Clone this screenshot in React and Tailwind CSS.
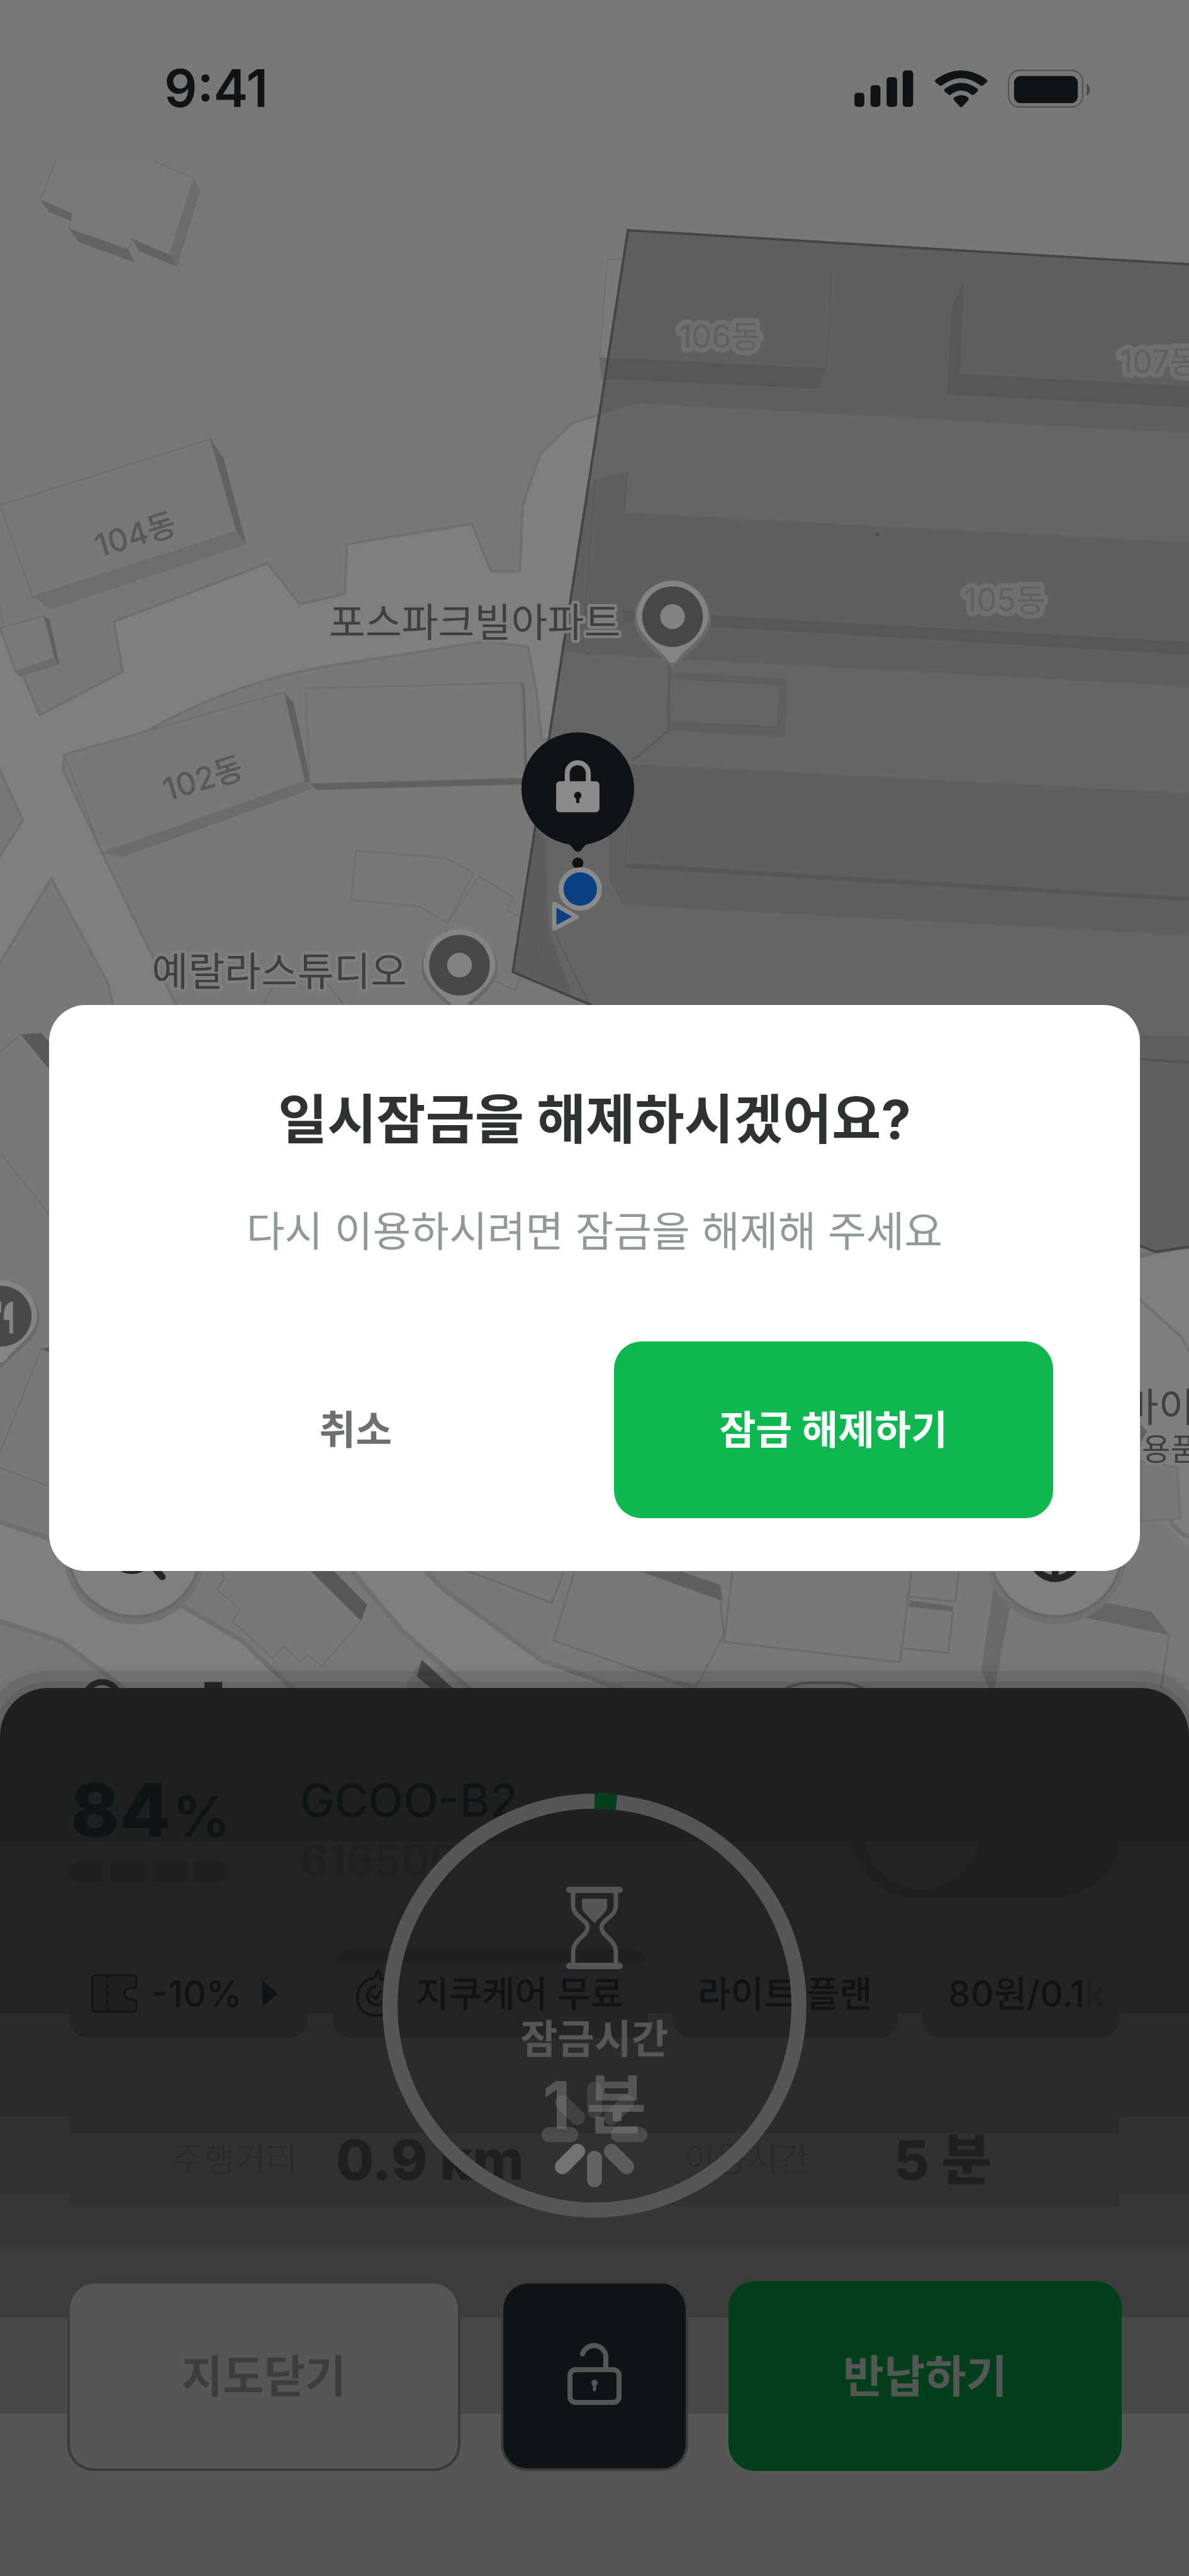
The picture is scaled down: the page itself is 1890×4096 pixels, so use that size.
import React from "react";
import { useState } from "react";

const PlacePin = ({ x, y, children }) => (
  <g transform={`translate(${x} ${y})`}>
    <path
      d="M-62 6A62 62 0 1 1 62 6C60 38 24 56 0 84C-24 56 -60 38 -62 6Z"
      fill="#6a6a6a"
    />
    <path
      d="M-58 0A58 58 0 1 1 58 0C56 34 20 50 8 70Q0 80 -8 70C-20 50 -56 34 -58 0Z"
      fill="#848484"
    />
    <circle r="49" fill="#484848" />
    {children || <circle r="20" fill="#828282" />}
  </g>
);

const CityMap = () => (
  <svg
    className="absolute inset-x-0 top-0 w-full"
    viewBox="0 0 1920 2800"
    aria-hidden="true"
    fontFamily="Inter, 'Noto Sans CJK KR', sans-serif"
  >
    <defs>
      <clipPath id="zone">
        <path d="M1014 372L1920 427V2014L1866 2022L1840 2012L951 1622L828 1570Z" />
      </clipPath>
    </defs>
    <rect width="1920" height="2800" fill="#787878" />

    {/* roads */}
    <g fill="#7f7f7f" stroke="#6f6f6f" strokeWidth="4" strokeLinejoin="round">
      <path d="M967 670L924 683L872 734L844 817L839 923H793L762 846L560 879L557 959L484 976L432 910L184 1004L198 1085L64 1155L39 1095L-9 1000V1235L0 1245L37 1325L0 1383L-9 1400V1590L0 1555L83 1419L175 1590L186 1640H290L284 1622L165 1378L102 1243L104 1219L233 1183Q380 1100 530 1076L784 1036L853 1045L866 1116L875 1196L900 1190Z" />
      <path
        strokeWidth="8"
        d="M-9 2455L79 2485L288 2590L392 2651L485 2740H215L165 2700L98 2651L-9 2616Z"
      />
      <path
        strokeWidth="8"
        d="M560 2520L570 2540L649 2634L772 2740H1030L1000 2727L875 2682L716 2567L690 2540L680 2520Z"
      />
      <path
        strokeWidth="8"
        d="M1800 2040L1842 2103L1905 2160L1940 2220V2010L1866 2022Z"
      />
    </g>
    <path d="M1800 2110L1842 2103L1905 2160L1920 2185V2500L1880 2460L1843 2458Z" fill="#7e7e7e" />
    <path d="M1843 2458L1906 2453L1901 2370L1843 2360Z" fill="#787878" stroke="#6f6f6f" strokeWidth="3" />
    <path d="M1888 2454Q1904 2480 1925 2484" fill="none" stroke="#6f6f6f" strokeWidth="7" />
    <path d="M1842 2300L1852 2312L1842 2330Z" fill="#606162" />

    {/* buildings, north west */}
    <g strokeLinejoin="round">
      <path
        d="M90 259L65 323L115 344L112 370L207 403L213 386L274 412L313 288L245 259"
        fill="#797979"
        stroke="#6f6f6f"
        strokeWidth="2"
      />
      <path
        d="M65 323L115 344V357L80 343ZM112 370L207 403L218 424L127 391ZM213 386L274 412L286 431L225 406Z"
        fill="#636365"
      />
      <path d="M313 288L323 309L286 431L274 412Z" fill="#6c6c6c" />

      <path d="M0 816L340 709L382 858L53 964Z" fill="#787878" stroke="#6f6f6f" strokeWidth="3" />
      <path d="M53 964L382 858L398 879L83 984Z" fill="#6d6d6d" />
      <path d="M340 709L361 740L398 879L382 858Z" fill="#616162" />

      <path d="M0 1014L71 995L90 1062L25 1085Z" fill="#797979" stroke="#6f6f6f" strokeWidth="3" />
      <path d="M71 995L80 1000L96 1074L88 1062Z" fill="#5f6061" />
      <path d="M25 1085L88 1062L96 1074L31 1093Z" fill="#6c6c6c" />
      <path d="M0 980L6 1012" stroke="#6f6f6f" strokeWidth="2" />

      <path d="M104 1219L459 1118L493 1262L165 1378Z" fill="#787878" stroke="#6f6f6f" strokeWidth="3" />
      <path d="M165 1378L493 1262L504 1274L198 1384Z" fill="#6b6b6b" />
      <path d="M459 1118L474 1135L502 1265L493 1262Z" fill="#5f6061" />
      <path d="M493 1112L842 1103L848 1258L500 1266Z" fill="#787878" stroke="#6f6f6f" strokeWidth="3" />
      <path d="M500 1266L848 1257V1267L512 1276Z" fill="#606162" />
      <path d="M842 1103L846 1112L850 1258" fill="none" stroke="#606162" strokeWidth="3" />

      <g fill="none" stroke="#6e6e6e" strokeWidth="3">
        <path d="M575 1374L718 1386L765 1410L722 1491L677 1464L567 1454Z" />
        <path d="M722 1491L774 1416L829 1449L818 1470L839 1480M730 1540L720 1500M800 1585L832 1600L842 1575" />
        <path d="M425 1622L450 1580M528 1590L555 1622" />
      </g>
    </g>

    {/* housing complex */}
    <path d="M981 419H1010L990 580H968Z" fill="#7a7a7a" stroke="#6f6f6f" strokeWidth="2" />
    <path d="M968 577H985V612H971Z" fill="#696969" />
    <g clipPath="url(#zone)">
      <rect x="800" y="360" width="1120" height="1700" fill="#5f5f61" />
      <g fill="#646567">
        <path d="M940 685L967 670L1031 651L1920 700V876L1008 828L1013 761L961 773L900 900Z" />
        <path d="M880 1050L953 1057L1920 1109V1675L820 1640Z" />
      </g>
      <path d="M1016 1234L1920 1281V1511L1008 1462L985 1420V1340Z" fill="#5f5f61" />
      <path d="M850 1320L882 1357L885 1500L930 1625L800 1580Z" fill="#5d5d5f" />
      <path d="M882 1357H985V1420L1000 1470L1000 1540L893 1500Z" fill="#646567" />
      <path d="M885 1500L850 1600M893 1500L951 1622M985 1340V1420L1008 1462" fill="none" stroke="#58595a" strokeWidth="2" />
      <path d="M1081 1084L1272 1096L1267 1191L1079 1180Z" fill="#5f5f61" />
      <path d="M1081 1096L1259 1106L1256 1174L1079 1166Z" fill="#636466" stroke="#595a5b" strokeWidth="1" />
      <path d="M1081 1070L1079 1180L1020 1230" fill="none" stroke="#58595a" strokeWidth="3" />
      <g fill="#555856">
        <path d="M940 575L968 577L1335 595L1322 628L971 612L940 610Z" />
        <path d="M1556 455L1537 494L1529 637L1920 658V624L1550 604Z" />
        <path d="M1004 985L1151 994L1920 1037V1058L1008 1004Z" />
        <path d="M1010 1394L1920 1449V1456L1010 1402Z" />
      </g>
      <path d="M1343 437L1335 595M961 773L940 1050L953 1057M1013 761L1008 828M1016 1320L1010 1394" fill="none" stroke="#58595a" strokeWidth="2" />
      <path d="M1840 1711L1920 1716" stroke="#545456" strokeWidth="4" />
      <circle cx="1417" cy="863" r="3" fill="#4c4c4e" />
    </g>
    <path
      d="M1920 427L1014 372L828 1570L951 1622L1840 2012L1866 2022L1920 2014"
      fill="none"
      stroke="#444546"
      strokeWidth="4"
    />

    {/* west edge */}
    <g fill="none" stroke="#6a6a6a" strokeWidth="2">
      <path d="M0 1699L33 1671M0 1862L79 1961M0 2346L67 2178L79 2180M0 2371L79 2401" />
    </g>
    <path d="M34 1671L66 1668L79 1683V1727Z" fill="#565957" />
    <path d="M67 2179L79 2176V2184Z" fill="#565957" />

    {/* south blocks */}
    <g fill="none" stroke="#6a6a6a" strokeWidth="3">
      <path strokeWidth="2" d="M355 2530L363 2550L351 2567L388 2600L375 2618L441 2679L459 2659L485 2685L496 2673L520 2691L583 2618" />
      <path d="M735 2530L891 2589L914 2530M930 2530L894 2650L1114 2727" />
      <path d="M1184 2530L1169 2652L1453 2685L1473 2530M1163 2586L1169 2640L1123 2727M1040 2700L1123 2725" />
      <path d="M1469 2579L1543 2587L1549 2530M1539 2603L1531 2670L1455 2662M1888 2641L1875 2727" />
    </g>
    <path d="M502 2538H539L593 2592L583 2618Z" fill="#555856" />
    <path d="M1035 2539H1102L1163 2560L1167 2586Z" fill="#5f5f61" />
    <path d="M1469 2585L1539 2595V2603L1467 2595Z" fill="#626365" />
    <path d="M1606 2558L1632 2592L1606 2727H1598L1584 2699Z" fill="#69696a" />
    <path d="M1778 2588L1859 2603L1888 2641L1733 2609Z" fill="#636466" />
    <path d="M681 2681L740 2735H700L673 2708Z" fill="#454545" />
    <path d="M673 2708L681 2681L650 2730H700Z" fill="#6e6e6e" />

    {/* floating map controls */}
    {[217, 1705].map((cx) => (
      <g key={cx}>
        <circle cx={cx} cy="2510" r="114" fill="#707070" />
        <circle cx={cx} cy="2506" r="108" fill="#686868" />
        <circle cx={cx} cy="2504" r="105" fill="#7f7f7f" />
      </g>
    ))}
    <g fill="none" stroke="#242424" strokeWidth="11" strokeLinecap="round">
      <circle cx="213" cy="2502" r="35" />
      <path d="M240 2522L262 2547" />
      <circle cx="1704" cy="2512" r="38" />
      <path d="M1704 2500V2550" />
    </g>
    <circle cx="165" cy="2745" r="28" fill="none" stroke="#2b2b2b" strokeWidth="10" />
    <rect x="330" y="2717" width="29" height="20" fill="#2b2b2b" />
    <path d="M1265 2730Q1285 2716 1330 2718Q1380 2716 1397 2730" fill="none" stroke="#565957" strokeWidth="4" />

    {/* labels */}
    <g fontSize="51" fontWeight="500" textAnchor="middle" fill="#585858">
      <text transform="translate(224 881) rotate(-17)">104동</text>
      <text transform="translate(333 1275) rotate(-17)">102동</text>
      <g
        fill="#606062"
        fontWeight="400"
        stroke="#6f6f6f"
        strokeWidth="16"
        strokeLinejoin="round"
        paintOrder="stroke"
      >
        <text x="1162" y="562">106동</text>
        <text x="1872" y="602">107동</text>
        <text x="1622" y="987">105동</text>
      </g>
    </g>
    <g
      fontSize="64"
      fontWeight="400"
      fill="#3f3f3f"
      stroke="#7f7f7f"
      strokeWidth="9"
      strokeLinejoin="round"
      paintOrder="stroke"
    >
      <text x="531" y="1028">포스파크빌아파트</text>
      <text x="245" y="1592">예랄라스튜디오</text>
      <text x="1812" y="2296">바이</text>
      <text x="1844" y="2359" fontSize="50">
        용품
      </text>
    </g>
    <PlacePin x={1086} y={996} />
    <PlacePin x={742} y={1559} />
    <PlacePin x={2} y={2126}>
      <path d="M19 -24Q4 -22 4 0V6H13V28H19ZM-8 -24H0V-6H-8Z" fill="#848484" />
    </PlacePin>

    {/* locked scooter and rider position */}
    <g fill="#0f1315">
      <circle cx="933" cy="1274" r="91" />
      <path d="M895 1352Q920 1360 927 1373Q933 1379 939 1373Q946 1360 971 1352Z" />
      <circle cx="933" cy="1394" r="9" />
    </g>
    <rect x="898" y="1262" width="70" height="50" rx="6" fill="#8b8b8b" />
    <path d="M916 1264V1249A17 17 0 0 1 950 1249V1264" fill="none" stroke="#8b8b8b" strokeWidth="8" />
    <circle cx="933" cy="1285" r="6" fill="#0f1315" />
    <path d="M933 1285V1297" stroke="#0f1315" strokeWidth="5" />
    <circle cx="937" cy="1436" r="31" fill="#0b4183" stroke="#8a8a8a" strokeWidth="8" />
    <path
      d="M895 1460L931 1481L895 1500Z"
      fill="#0b4183"
      stroke="#8a8a8a"
      strokeWidth="7"
      strokeLinejoin="round"
    />
  </svg>
);

const StatusBar = () => (
  <header className="relative flex h-[282px] items-center justify-between pr-[154px] pl-[261px] text-[#0f1315]">
    <time className="text-[82px] leading-none font-semibold">9:41</time>
    <svg className="h-[60px] w-[378px]" viewBox="1379 111 384 61" fill="#0f1315" aria-hidden="true">
      <rect x="1379" y="148" width="16" height="23" rx="5" />
      <rect x="1405" y="136" width="16" height="35" rx="5" />
      <rect x="1431" y="123" width="17" height="48" rx="5" />
      <rect x="1457" y="112" width="17" height="59" rx="5" />
      <path d="M1510 131Q1508 129 1511 126Q1552 98 1592 126Q1595 129 1593 131L1587 136Q1585 138 1582 136Q1552 113 1521 136Q1518 138 1516 136Z" />
      <path d="M1525 146Q1523 143 1526 141Q1552 123 1577 141Q1580 143 1578 146L1572 151Q1570 153 1568 151Q1552 138 1535 151Q1533 153 1531 151Z" />
      <path d="M1540 160Q1538 157 1541 155Q1552 149 1562 155Q1565 157 1563 160L1553 171Q1552 172 1550 171Z" />
      <rect x="1628" y="112" width="120" height="59" rx="18" fill="none" stroke="#4e4f50" strokeWidth="2" />
      <rect x="1637" y="121" width="103" height="44" rx="11" />
      <path d="M1754 133Q1760 137 1760 143Q1760 150 1754 153Z" fill="#4e4f50" />
    </svg>
  </header>
);

const chipStyle = "flex h-[140px] shrink-0 items-center rounded-[28px] bg-[#242424]";

const Chips = () => (
  <div className="mt-[83px] flex gap-10 overflow-hidden px-1 text-[57px] leading-none font-medium whitespace-nowrap text-[#101416]">
    <button className={`${chipStyle} w-[378px] gap-[22px] pl-[34px]`}>
      <svg className="h-[62px] w-[74px]" viewBox="0 0 74 62" fill="none" stroke="#101416" strokeWidth="3">
        <path
          d="M6 2H66Q72 2 72 8V18Q72 22 67 22Q54 22 52 31Q54 41 67 41Q72 41 72 46V54Q72 60 66 60H6Q2 60 2 55V7Q2 2 6 2Z"
          fill="#1f2120"
        />
        <path d="M26 2V60" strokeDasharray="8 5" />
      </svg>
      -10%
      <svg className="ml-[10px] h-[42px] w-[24px]" viewBox="0 0 24 42" fill="#101416">
        <path d="M1 3Q1 0 4 2L23 19Q24 21 23 23L4 40Q1 42 1 39Z" />
      </svg>
    </button>
    <button
      className={`${chipStyle} w-[500px] bg-[linear-gradient(#1f2120_20px,#242424_20px)] pl-[36px]`}
    >
      <svg className="mr-[30px] h-[76px] w-[66px]" viewBox="0 0 66 76" fill="none" stroke="#101416" strokeWidth="4">
        <path d="M33 10Q33 4 37 2Q41 8 39 14Q62 20 63 43Q62 72 33 73Q4 72 3 43Q5 22 22 15Q30 14 33 10Z" />
        <path d="M33 26Q20 30 19 42Q21 55 33 56Q46 55 48 42M24 39L33 46L40 34" />
      </svg>
      지쿠케어 무료
    </button>
    <button className={`${chipStyle} w-[358px] justify-center`}>라이트 플랜</button>
    <button className={`${chipStyle} w-[312px] pl-[40px]`}>
      80원/0.1<span className="text-[#1d1f1f]">k</span>
    </button>
  </div>
);

const Stats = () => (
  <dl className="mx-1 mt-[119px] flex h-[150px] items-center bg-[linear-gradient(#2b2b2b_33px,#303132_33px)] pl-[163px] leading-none whitespace-nowrap">
    <dt className="text-[54px] font-light text-[#282929]">주행거리</dt>
    <dd className="ml-[61px] text-[88px] font-extrabold text-[#1f2120]">0.9 km</dd>
    <dt className="ml-[255px] text-[54px] font-light text-[#282929]">이동시간</dt>
    <dd className="ml-[134px] text-[87px] font-extrabold text-[#1f2120]">5 분</dd>
  </dl>
);

// opacity of each spoke, clockwise from the top
const spokes = [0.2, 0.22, 0.3, 0.45, 0.52, 0.7, 0.3, 0.22];

const LockTimer = () => (
  <div className="pointer-events-none absolute inset-x-0 top-[168px] flex justify-center">
    <div className="relative flex size-[674px] flex-col items-center pt-[148px] leading-none text-[#545755]">
      <svg className="absolute inset-0" viewBox="0 0 674 674" fill="none" strokeWidth="24">
        <circle cx="337" cy="337" r="325" stroke="#545755" />
        <path d="M337 12A325 325 0 0 1 372 14" stroke="#043f1c" />
      </svg>
      <svg className="h-[131px] w-[90px]" viewBox="0 0 90 131" fill="none" stroke="#545755">
        <path d="M5 5H85M5 126H85" strokeWidth="10" strokeLinecap="round" />
        <path
          d="M11 8V30C11 48 34 52 34 65C34 78 11 84 11 104V124M79 8V30C79 48 56 52 56 65C56 78 79 84 79 104V124"
          strokeWidth="7"
        />
        <path d="M26 19H64Q65 19 65 21V32Q65 36 62 40L45 58L28 40Q25 36 25 32V21Q25 19 26 19Z" fill="#545755" stroke="none" />
      </svg>
      <p className="mt-[79px] text-[64px] font-bold">잠금시간</p>
      <p className="mt-[21px] text-[104px] font-bold">1 분</p>
      <svg className="absolute top-[457px] size-[170px]" viewBox="-85 -85 170 170">
        {spokes.map((opacity, i) => (
          <rect
            key={i}
            x="-12"
            y="-84"
            width="24"
            height="58"
            rx="12"
            fill="#909090"
            opacity={opacity}
            transform={`rotate(${i * 45})`}
          />
        ))}
      </svg>
    </div>
  </div>
);

const RideSheet = () => {
  const [headlight, setHeadlight] = useState(false);

  return (
    <section className="relative mt-auto rounded-t-[76px] bg-[linear-gradient(#1f2120_245px,#242424_245px,#242424_517px,#2b2b2b_517px,#2b2b2b_682px,#303132_682px,#303132_804px,#363836_804px,#363836_889px,#3c3c3c_889px,#3c3c3c_1001px,#484848_1001px,#484848_1154px,#545755_1154px)] px-[107px] pt-[118px] pb-[167px] shadow-[0_0_0_10px_rgba(20,30,36,0.11),0_0_0_27px_rgba(0,0,0,0.08),0_0_0_35px_rgba(0,0,0,0.03)]">
      <div className="flex h-[215px] items-start leading-none text-[#101416]">
        <div className="w-[370px] pt-[17px]">
          <p className="pl-[5px] text-[118px] leading-none font-extrabold">
            84<span className="pl-[3px] text-[90px] font-bold">%</span>
          </p>
          <div className="mt-6 flex gap-[10px] pl-px">
            <span className="h-[30px] w-[57px] rounded-l-full bg-[#1f2120]"></span>
            <span className="h-[30px] w-[57px] bg-[#1f2120]"></span>
            <span className="h-[30px] w-[57px] bg-[#1f2120]"></span>
            <span className="h-[30px] w-[55px] rounded-r-full bg-[#1f2120]"></span>
          </div>
        </div>
        <div className="pt-6">
          <p className="text-[73px] font-medium">GCOO-B2</p>
          <p className="mt-[25px] text-[69px] font-semibold text-[#1f2120]">616500</p>
        </div>
        <label className="relative ml-auto flex h-[215px] w-[434px] items-center rounded-full bg-[#1f2120] px-[23px]">
          <input
            type="checkbox"
            role="switch"
            aria-label="전조등"
            className="absolute inset-0 appearance-none"
            checked={headlight}
            onChange={(e) => setHeadlight(e.target.checked)}
          />
          <span className="size-[187px] rounded-full bg-[linear-gradient(#1f2120_113px,#242424_113px)]"></span>
        </label>
      </div>
      <Chips />
      <Stats />
      <div className="mt-[118px] flex h-[302px] gap-[64px] text-[71px] font-bold">
        <button className="mt-1 flex-1 rounded-[42px] border-4 border-t-0 border-[#3a3c3b] bg-[#545755] text-[#3c3d3d]">
          지도닫기
        </button>
        <button
          aria-label="잠금 해제"
          className="mt-1 flex w-[298px] items-center justify-center rounded-[42px] border-4 border-t-0 border-[#3a3c3d] bg-[#101416] pb-2"
        >
          <svg className="h-[100px] w-[86px]" viewBox="0 0 86 100" fill="none" stroke="#545755" strokeWidth="8">
            <rect x="4" y="44" width="78" height="52" rx="9" />
            <path d="M24 19A19 19 0 0 1 61 22V42" strokeLinecap="round" />
            <circle cx="43" cy="65" r="5" fill="#545755" stroke="none" />
            <path d="M43 65V78" strokeWidth="5" />
          </svg>
        </button>
        <button className="flex-1 rounded-[42px] border-4 border-[#043f1c] bg-[#043f1c] text-[#545755]">
          반납하기
        </button>
      </div>
      <LockTimer />
    </section>
  );
};

const UnlockDialog = () => (
  <div className="fixed inset-0 flex items-center justify-center px-[78px]">
    <div
      role="dialog"
      aria-labelledby="unlock-title"
      className="w-full rounded-[58px] bg-white px-[138px] pt-[140px] pb-[84px] text-center"
    >
      <h1 id="unlock-title" className="text-[85px] leading-none font-bold text-[#2f3232]">
        일시잠금을 해제하시겠어요?
      </h1>
      <p className="mt-[102px] text-[66px] leading-none text-[#8f9a98]">
        다시 이용하시려면 잠금을 해제해 주세요
      </p>
      <div className="mt-[142px] grid grid-cols-2 gap-[61px] text-[63px] leading-none font-bold">
        <button className="h-[281px] rounded-[44px] text-[#6c706f]">취소</button>
        <button className="h-[281px] rounded-[44px] bg-[#0db850] text-white">잠금 해제하기</button>
      </div>
    </div>
  </div>
);

const App = () => {
  return (
    <main className="relative flex min-h-screen flex-col overflow-hidden bg-[#787878] font-['Inter','Noto_Sans_CJK_KR',sans-serif]">
      <CityMap />
      <StatusBar />
      <RideSheet />
      <UnlockDialog />
    </main>
  );
};

export default App;
